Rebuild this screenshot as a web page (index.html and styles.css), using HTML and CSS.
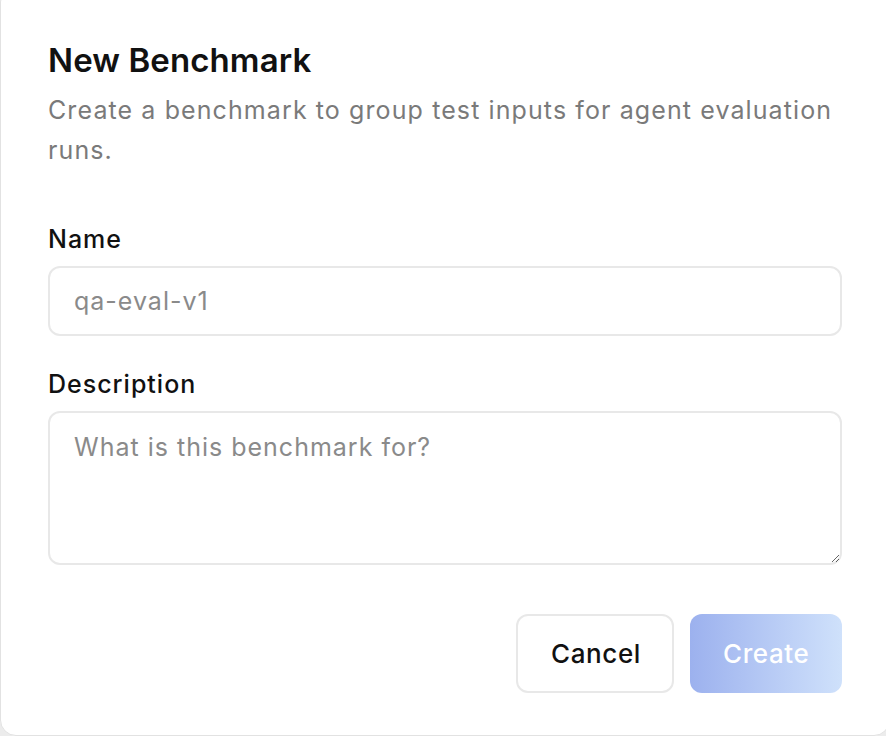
FILE: index.html
```html
<!DOCTYPE html>
<html lang="en">
<head>
<meta charset="UTF-8">
<title>New Benchmark</title>
<meta name="viewport" content="width=device-width,initial-scale=1">
<link rel="stylesheet" href="styles.css">
</head>
<body>
  <div class="dialog">
    <h2 class="dialog-title">New Benchmark</h2>
    <p class="dialog-desc">Create a benchmark to group test inputs for agent evaluation runs.</p>

    <form class="form">
      <label class="field">
        <span class="field-label">Name</span>
        <input class="input" type="text" placeholder="qa-eval-v1">
      </label>

      <label class="field">
        <span class="field-label">Description</span>
        <textarea class="input textarea" placeholder="What is this benchmark for?"></textarea>
      </label>

      <div class="actions">
        <button type="button" class="btn btn-ghost">Cancel</button>
        <button type="button" class="btn btn-primary" disabled>Create</button>
      </div>
    </form>
  </div>
</body>
</html>
```

FILE: styles.css
```css
:root{font-family:Inter,"Noto Sans",sans-serif;color:#111}
html,body{height:100%}
body{margin:0;background:#ececec;overflow:hidden}

/* ─────────── DIALOG ─────────── */
.dialog{box-sizing:border-box;width:890px;height:750px;margin-top:-14px;
        padding:53px 47px 0;background:#fff;border:1px solid #e2e2e2;
        border-radius:16px}
.dialog-title{margin:0;font-size:33px;line-height:40px;font-weight:600;
              letter-spacing:.1px}
.dialog-desc{margin:10px 0 0;font-size:25px;line-height:40px;color:#7a7a7a;
             letter-spacing:1.1px}

/* ─────────── FORM ─────────── */
.form{display:flex;flex-direction:column;margin-top:53px}
.field{display:flex;flex-direction:column;gap:11px}
.field + .field{margin-top:32px}
.field-label{font-size:25px;line-height:32px;font-weight:500;letter-spacing:1px}

.input{box-sizing:border-box;width:100%;height:70px;padding:0 24px;
       font:inherit;font-size:25px;letter-spacing:1px;color:#111;background:#fff;
       border:2px solid #e8e8e8;border-radius:12px;outline:none}
.input::placeholder{color:#8a8a8a}
.textarea{height:154px;padding:16px 24px;line-height:36px;resize:vertical}

/* ─────────── BUTTONS ─────────── */
.actions{display:flex;justify-content:flex-end;gap:16px;margin-top:49px}
.btn{box-sizing:border-box;height:79px;padding:0 33px;font:inherit;
     font-size:26px;font-weight:500;letter-spacing:.6px;border-radius:12px;
     cursor:pointer}
.btn-ghost{width:158px;background:#fff;color:#111;border:2px solid #e8e8e8}
.btn-primary{width:152px;color:#fff;border:none;
             background:linear-gradient(90deg,#9cb1ee,#cfe1fb)}
.btn-primary:disabled{cursor:not-allowed}
```
